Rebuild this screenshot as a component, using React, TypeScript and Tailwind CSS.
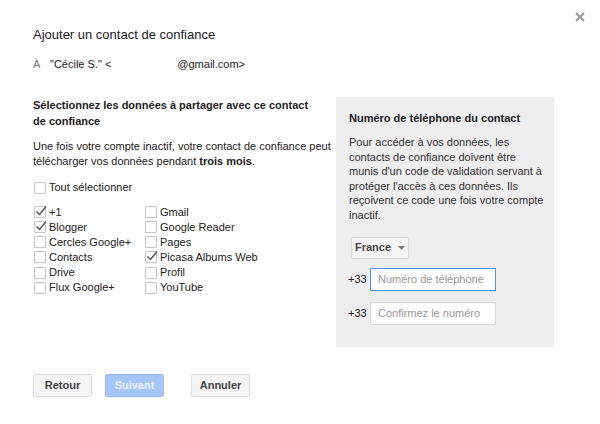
import React from 'react';

function Check({ checked }: { checked?: boolean }) {
  return (
    <span className="relative inline-block w-[12px] h-[12px] shrink-0 border border-[#c6c6c6] rounded-[1px] bg-white">
      {checked && (
        <svg className="absolute left-[0px] top-[-2px]" width="12" height="12" viewBox="0 0 12 12">
          <path d="M1.5 6.5 L4.5 9.5 L11 1.5" fill="none" stroke="#555" strokeWidth="1.5" />
        </svg>
      )}
    </span>
  );
}

function Item({ label, checked }: { label: string, checked?: boolean }) {
  return (
    <label className="flex items-center gap-[3px] h-[15.2px]">
      <Check checked={checked} />
      <span>{label}</span>
    </label>
  );
}

const leftItems = [
  { label: '+1', checked: true },
  { label: 'Blogger', checked: true },
  { label: 'Cercles Google+' },
  { label: 'Contacts' },
  { label: 'Drive' },
  { label: 'Flux Google+' },
];

const rightItems = [
  { label: 'Gmail' },
  { label: 'Google Reader' },
  { label: 'Pages' },
  { label: 'Picasa Albums Web', checked: true },
  { label: 'Profil' },
  { label: 'YouTube' },
];

export default function App() {
  return (
    <div className="relative w-[600px] h-[424px] bg-white text-[11px] text-[#222] font-['Liberation_Sans',Arial,sans-serif]">
      <svg className="absolute right-[15px] top-[12px]" width="10" height="10" viewBox="0 0 10 10">
        <path d="M1 1 L9 9 M9 1 L1 9" stroke="#999" strokeWidth="2" />
      </svg>

      <div className="pl-[33px] pt-[25px]">
        <h1 className="text-[13px] leading-[20px] text-[#222]">Ajouter un contact de confiance</h1>

        <div className="mt-[12px] flex items-center leading-[15px]">
          <span className="text-[#777] w-[17px]">À</span>
          <span>"Cécile S." &lt;</span>
          <span className="w-[66px]" />
          <span>@gmail.com&gt;</span>
        </div>

        <div className="mt-[25px] flex gap-[2px]">
          <div className="w-[301px]">
            <h2 className="font-bold leading-[16px] pr-[24px]">
              Sélectionnez les données à partager avec ce contact de confiance
            </h2>
            <p className="mt-[10px] leading-[15px]">
              Une fois votre compte inactif, votre contact de confiance peut télécharger vos données pendant <b>trois mois</b>.
            </p>
            <div className="mt-[11px] pl-[1px]">
              <Item label="Tout sélectionner" />
            </div>
            <div className="mt-[9px] pl-[1px] flex">
              <div className="w-[111px]">
                {leftItems.map((it) => (
                  <Item key={it.label} label={it.label} checked={it.checked} />
                ))}
              </div>
              <div>
                {rightItems.map((it) => (
                  <Item key={it.label} label={it.label} checked={it.checked} />
                ))}
              </div>
            </div>
          </div>

          <div className="w-[218px] h-[250px] bg-[#eeeeee] pl-[13px] pr-[9px] pt-[13px]">
            <h3 className="font-bold leading-[16px]">Numéro de téléphone du contact</h3>
            <p className="mt-[9px] leading-[14.6px] text-[#333]">
              Pour accéder à vos données, les contacts de confiance doivent être munis d'un code de validation servant à protéger l'accès à ces données. Ils reçoivent ce code une fois votre compte inactif.
            </p>
            <button className="mt-[14px] ml-[2px] w-[58px] h-[22px] flex items-center justify-center gap-[7px] bg-[#f5f5f5] border border-[#dcdcdc] rounded-[2px] text-[11px] font-bold text-[#444]">
              France
              <svg width="7" height="4" viewBox="0 0 7 4">
                <path d="M0 0 L7 0 L3.5 4 Z" fill="#777" />
              </svg>
            </button>
            <div className="mt-[9px] flex items-center gap-[4px]">
              <span className="w-[18px] -ml-[1px]">+33</span>
              <input
                className="w-[126px] h-[23px] bg-white border border-[#4d90fe] px-[7px] text-[11px] outline-none placeholder:text-[#999]"
                placeholder="Numéro de téléphone"
              />
            </div>
            <div className="mt-[11px] flex items-center gap-[4px]">
              <span className="w-[18px] -ml-[1px]">+33</span>
              <input
                className="w-[126px] h-[23px] bg-white border border-[#d9d9d9] px-[7px] text-[11px] outline-none placeholder:text-[#999]"
                placeholder="Confirmez le numéro"
              />
            </div>
          </div>
        </div>

        <div className="mt-[27px] flex">
          <button className="w-[59px] h-[23px] bg-[#f5f5f5] border border-[#dcdcdc] rounded-[2px] text-[11px] font-bold text-[#444]">
            Retour
          </button>
          <button className="ml-[13px] w-[59px] h-[23px] bg-[#a6c6fa] border border-[#9bbdf5] rounded-[2px] text-[11px] font-bold text-[#e8f0fe]">
            Suivant
          </button>
          <button className="ml-[27px] w-[59px] h-[23px] bg-[#f5f5f5] border border-[#dcdcdc] rounded-[2px] text-[11px] font-bold text-[#444]">
            Annuler
          </button>
        </div>
      </div>
    </div>
  );
}
